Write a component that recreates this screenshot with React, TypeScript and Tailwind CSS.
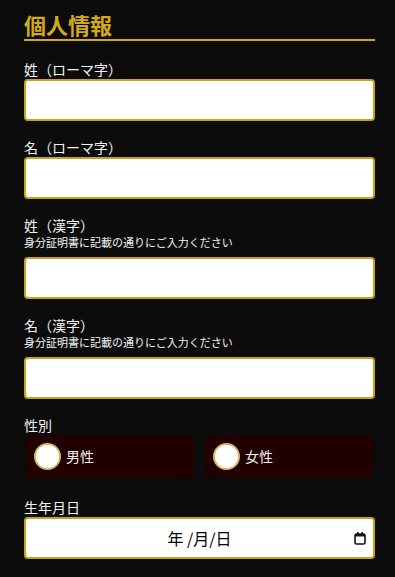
const font = {
  fontFamily: '"Noto Sans CJK JP", "Noto Sans", sans-serif',
};

function Field({ label, note }: { label: string; note?: string }) {
  return (
    <div className="mt-4">
      <label className="block text-[14px] leading-[20px] text-[#f2f2f2]">{label}</label>
      {note ? (
        <p className="mb-[8px] text-[11px] leading-[14px] text-[#f2f2f2]">{note}</p>
      ) : null}
      <input
        type="text"
        className="block h-[42px] w-full rounded-[4px] border-2 border-[#c9a312] bg-white px-3 text-[16px] text-black outline-none"
      />
    </div>
  );
}

function Radio({ label }: { label: string }) {
  return (
    <label className="flex h-[43px] items-center gap-[5px] rounded-[6px] bg-[#210000] px-2">
      <span className="h-[27px] w-[27px] rounded-full border-2 border-[#d6b767] bg-white" />
      <span className="text-[14px] text-[#f2f2f2]">{label}</span>
    </label>
  );
}

export default function App() {
  return (
    <div className="min-h-[577px] bg-[#0c0c0c] pb-4 pl-6 pr-5 pt-[10px]" style={font}>
      <h2 className="border-b-2 border-[#d4a91f] text-[22px] font-bold leading-[29px] text-[#d4a91f]">
        個人情報
      </h2>
      <div className="pt-[2px]">
        <Field label="姓（ローマ字）" />
        <Field label="名（ローマ字）" />
        <Field label="姓（漢字）" note="身分証明書に記載の通りにご入力ください" />
        <Field label="名（漢字）" note="身分証明書に記載の通りにご入力ください" />

        <div className="mt-4">
          <p className="text-[14px] leading-[20px] text-[#f2f2f2]">性別</p>
          <div className="mt-0 grid grid-cols-2 gap-[11px] px-[2px]">
            <Radio label="男性" />
            <Radio label="女性" />
          </div>
        </div>

        <div className="mt-[19px]">
          <p className="text-[14px] leading-[20px] text-[#f2f2f2]">生年月日</p>
          <div className="relative flex h-[42px] w-full items-center justify-center rounded-[4px] border-2 border-[#c9a312] bg-white">
            <span className="text-[16px] text-black">年 /月/日</span>
            <svg
              className="absolute right-[7px] top-[12px]"
              width="12"
              height="14"
              viewBox="0 0 12 14"
            >
              <rect x="1" y="3" width="10" height="10" rx="1.5" fill="none" stroke="#111" strokeWidth="1.6" />
              <rect x="1" y="3" width="10" height="2.5" fill="#111" />
              <rect x="3" y="1" width="1.5" height="3" fill="#111" />
              <rect x="7.5" y="1" width="1.5" height="3" fill="#111" />
            </svg>
          </div>
        </div>
      </div>
    </div>
  );
}
